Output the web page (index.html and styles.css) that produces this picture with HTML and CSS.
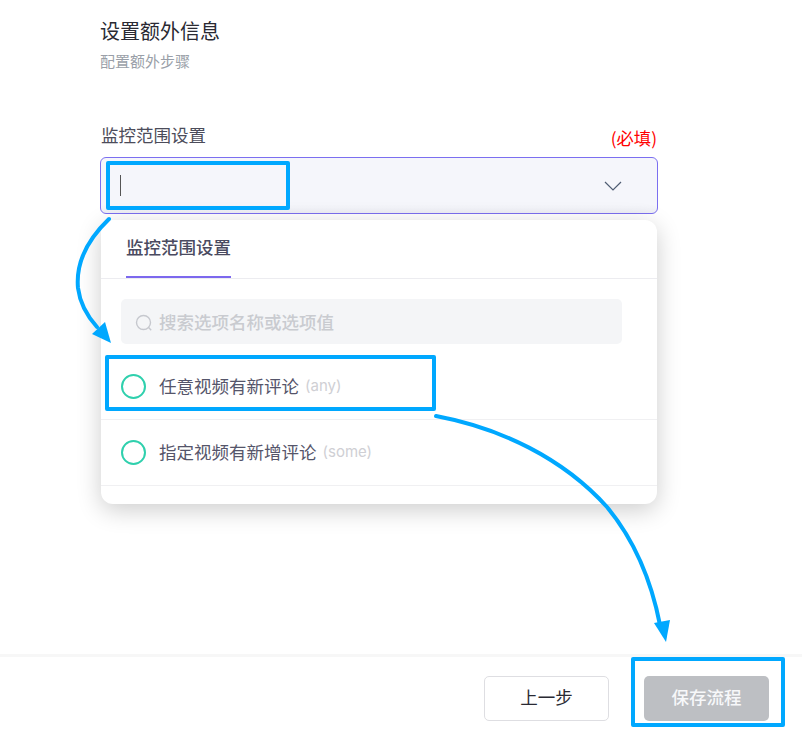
FILE: index.html
```html
<!DOCTYPE html>
<html lang="zh-CN">
<head>
<meta charset="utf-8">
<title>设置额外信息</title>
<link rel="stylesheet" href="styles.css">
</head>
<body>
<div class="page">
  <main class="content">
    <h1 class="title">设置额外信息</h1>
    <p class="subtitle">配置额外步骤</p>
    <div class="field">
      <div class="field-head">
        <span class="field-label">监控范围设置</span>
        <span class="required">(必填)</span>
      </div>
      <div class="select">
        <span class="caret"></span>
        <svg class="chevron" width="18" height="10" viewBox="0 0 18 10"><path d="M1 1l8 8 8-8" fill="none" stroke="#4f5d73" stroke-width="1.2"/></svg>
      </div>
      <div class="menu">
        <div class="tabs"><span class="tab">监控范围设置</span></div>
        <div class="search-wrap">
          <div class="search">
            <svg class="search-icon" width="18" height="18" viewBox="0 0 18 18"><circle cx="8.5" cy="8.5" r="7" fill="none" stroke="#c6c8ce" stroke-width="1.4"/><path d="M13.6 13.6l2.6 2.6" stroke="#c6c8ce" stroke-width="1.4" fill="none"/></svg>
            <span>搜索选项名称或选项值</span>
          </div>
        </div>
        <div class="option"><span class="radio"></span><span class="option-name">任意视频有新评论</span><span class="option-value">(any)</span></div>
        <div class="option"><span class="radio"></span><span class="option-name">指定视频有新增评论</span><span class="option-value">(some)</span></div>
      </div>
    </div>
  </main>
  <footer class="footer">
    <button class="btn btn-back" type="button">上一步</button>
    <button class="btn btn-save" type="button">保存流程</button>
  </footer>
</div>
<div class="mark mark-input"></div>
<div class="mark mark-option"></div>
<div class="mark mark-save"></div>
<svg class="arrows" width="802" height="731" viewBox="0 0 802 731">
  <path d="M109 219C84 243 76 266 78 288C80 304 88 317 97 327" fill="none" stroke="#00a8ff" stroke-width="4" stroke-linecap="round"/>
  <path d="M92 334L105 322L111 343Z" fill="#00a8ff"/>
  <path d="M436 416C500 428 563 458 607 507C636 542 652 584 660 625" fill="none" stroke="#00a8ff" stroke-width="4" stroke-linecap="round"/>
  <path d="M654 623L670 620L666 642Z" fill="#00a8ff"/>
</svg>
</body>
</html>
```
FILE: styles.css
```css
* { box-sizing: border-box; }
html, body { margin: 0; padding: 0; background: #fff; }
body {
  width: 802px;
  height: 731px;
  overflow: hidden;
  position: relative;
  font-family: "Noto Sans CJK SC", "Inter", sans-serif;
}
.page { height: 731px; display: flex; flex-direction: column; }
.content { flex: 1; padding: 17px 144px 0 100px; }
.title { margin: 0; font-size: 20px; line-height: 28px; font-weight: 400; color: #2a2a33; }
.subtitle { margin: 6px 0 0; font-size: 15px; line-height: 20px; color: #9a9fa8; }
.field { position: relative; margin-top: 52px; }
.field-head { display: flex; justify-content: space-between; align-items: flex-end; height: 34px; padding: 0 1px; }
.field-label { font-size: 17.5px; line-height: 24px; color: #4c4c5a; align-self: flex-start; }
.required { font-size: 17.3px; line-height: 22px; color: #f00; margin-bottom: 8px; }
.select {
  height: 57px;
  border: 1px solid #7b6ff0;
  border-radius: 6px;
  background: linear-gradient(#f5f6fb 85%, #eeeff5);
  display: flex;
  align-items: center;
  justify-content: space-between;
  padding: 0 35px 0 19px;
}
.caret { width: 1px; height: 21px; background: #555; }
.chevron { display: block; margin-top: 1px; }
.menu {
  position: absolute;
  left: 1px;
  right: 1px;
  top: 97px;
  height: 284px;
  background: #fff;
  border-radius: 12px;
  box-shadow: 0 6px 24px rgba(0, 0, 0, 0.2);
  padding-bottom: 19px;
}
.tabs { height: 59px; border-bottom: 1px solid #ececf0; padding-left: 25px; display: flex; }
.tab {
  height: 58px;
  line-height: 54px;
  font-size: 17.5px;
  font-weight: 500;
  color: #4a4a60;
  border-bottom: 2px solid #7c68ee;
}
.search-wrap { height: 75px; padding: 20px 35px 0 20px; }
.search {
  height: 45px;
  background: #f4f5f7;
  border-radius: 5px;
  display: flex;
  align-items: center;
  padding-left: 14px;
  gap: 6px;
  font-size: 17.5px;
  font-weight: 500;
  color: #c9cbd0;
}
.search-icon { display: block; margin-top: 2px; }
.option {
  height: 66px;
  border-bottom: 1px solid #f0f0f2;
  display: flex;
  align-items: center;
  padding-left: 20px;
}
.radio { width: 25px; height: 25px; border: 2px solid #2fd0ad; border-radius: 50%; margin-right: 13px; }
.option-name { font-size: 17.5px; color: #55556a; padding-bottom: 2px; }
.option-value { font-family: "Inter", sans-serif; font-size: 15px; color: #cfcfd4; margin-left: 6px; padding-bottom: 2px; }
.footer {
  height: 77px;
  border-top: 3px solid #f7f7f7;
  display: flex;
  justify-content: flex-end;
  gap: 35px;
  padding: 19px 33px 0 0;
}
.btn { width: 125px; height: 45px; border-radius: 5px; font: inherit; font-size: 17.5px; padding: 0 0 5px; }
.btn-back { background: #fff; border: 1px solid #dedee2; color: #2a2a33; }
.btn-save { background: #bdbfc3; border: 0; color: #f7f8fa; font-weight: 500; }
.mark { position: absolute; border: 4px solid #00a8ff; border-radius: 2px; }
.mark-input { left: 106px; top: 161px; width: 184px; height: 49px; }
.mark-option { left: 105px; top: 355px; width: 331px; height: 56px; }
.mark-save { left: 631px; top: 657px; width: 154px; height: 70px; }
.arrows { position: absolute; left: 0; top: 0; pointer-events: none; }
```
